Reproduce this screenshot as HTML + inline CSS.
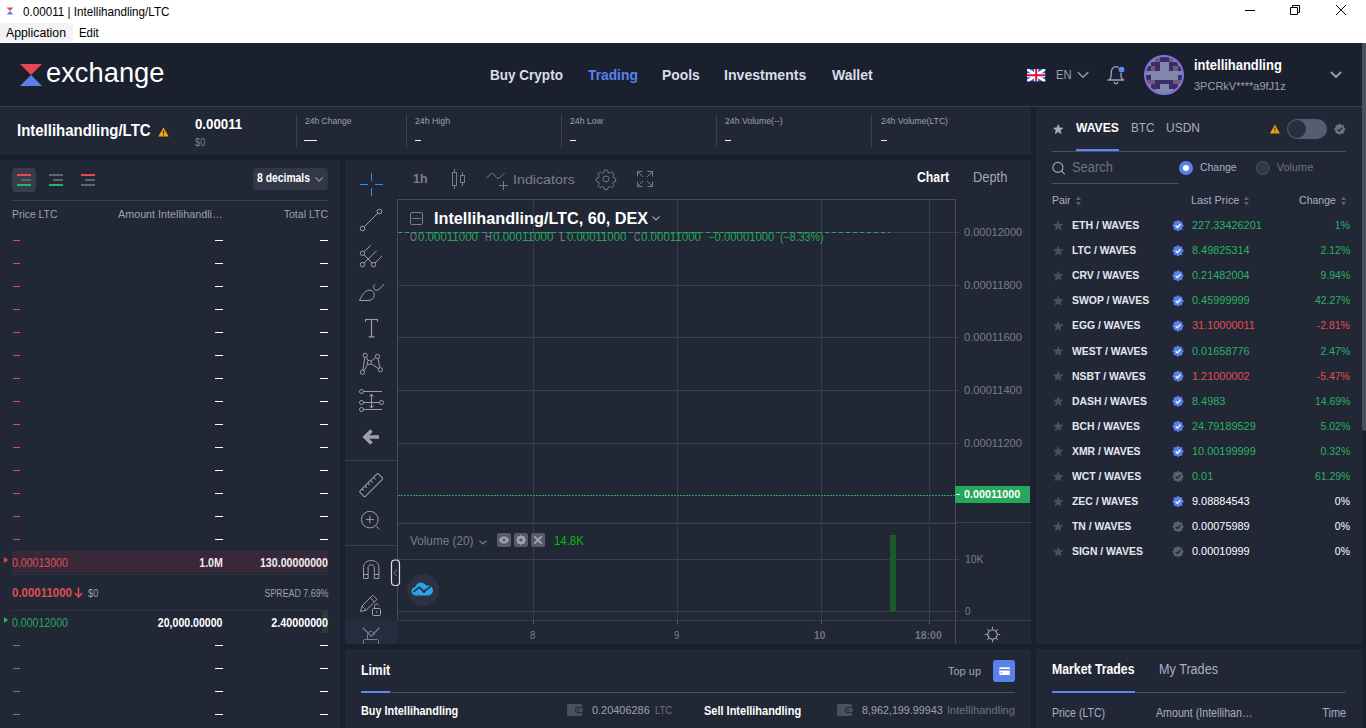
<!DOCTYPE html>
<html>
<head>
<meta charset="utf-8">
<title>0.00011 | Intellihandling/LTC</title>
<style>
*{box-sizing:border-box;margin:0;padding:0}
html,body{width:1366px;height:728px;overflow:hidden;background:#1a1f2d;font-family:"Liberation Sans",sans-serif;}
body{position:relative;color:#fff}
.a{position:absolute}
.t{position:absolute;white-space:nowrap;transform-origin:0 50%}
.r{position:absolute;white-space:nowrap;transform-origin:100% 50%}
.p{position:absolute;background:#222736}
.ln{position:absolute;background:#3a3f4e;height:1px}
.vl{position:absolute;background:#3a3f4e;width:1px}
.dw{position:absolute;background:#fff;height:1px;width:8px}
.dr{position:absolute;background:#e04d52;height:1px;width:7px;left:13px}
.dg{position:absolute;background:#28a85c;height:1px;width:7px;left:13px}
svg{position:absolute;overflow:visible}
</style>
</head>
<body>
<!-- TITLE BAR -->
<div class="a" style="left:0;top:0;width:1366px;height:43px;background:#fff"></div>
<svg style="left:6px;top:7px" width="8" height="8" viewBox="0 0 8 8"><path d="M0.6 0.4h6.8L4 3.9z" fill="#e5494d"/><path d="M0.6 7.6h6.8L4 4.1z" fill="#5a81ea"/></svg>
<div class="a" style="left:0;top:23px;width:73px;height:19px;background:#f3f3f3;border-radius:3px"></div>
<svg style="left:1240px;top:0" width="126" height="23" viewBox="0 0 126 23" fill="none" stroke="#000" stroke-width="1">
  <path d="M5 10.5h10"/>
  <path d="M50.5 7.5h7v7h-7z M52.5 7.5v-2h7v7h-2"/>
  <path d="M96 5l10 10M106 5l-10 10"/>
</svg>

<!-- HEADER -->
<div class="a" style="left:0;top:43px;width:1366px;height:63px;background:#1b202e"></div>
<div class="a" style="left:0;top:106px;width:1362px;height:1px;background:#3a3f50"></div>
<svg style="left:20px;top:64px" width="22" height="22" viewBox="0 0 22 22"><path d="M0 0h22L11 11z" fill="#e5494d"/><path d="M0 22h22L11 11z" fill="#5a81ea"/></svg>
<!-- flag -->
<svg style="left:1026.800px;top:68.700px" width="18.400" height="12.500" viewBox="0 0 60 40" preserveAspectRatio="none">
  <clipPath id="fc"><rect width="60" height="40"/></clipPath>
  <g clip-path="url(#fc)">
  <rect width="60" height="40" fill="#2a5af0"/>
  <path d="M0 0L60 40M60 0L0 40" stroke="#fff" stroke-width="9"/>
  <path d="M30 0v40M0 20h60" stroke="#fff" stroke-width="13.500"/>
  <path d="M30 0v40M0 20h60" stroke="#e0102a" stroke-width="6.500"/>
  </g>
</svg>
<svg style="left:1077px;top:71px" width="12" height="8" viewBox="0 0 12 8" fill="none" stroke="#8f95a8" stroke-width="1.600" stroke-linecap="round" stroke-linejoin="round"><path d="M1.200 1.500L6 6.300L10.800 1.500"/></svg>
<!-- bell -->
<svg style="left:1106px;top:65px" width="20" height="22" viewBox="0 0 20 22" fill="none" stroke="#9ba1b1" stroke-width="1.400" stroke-linecap="round" stroke-linejoin="round">
  <path d="M1.800 15h16M3.700 14.800c1.100-1.300 1.500-2.900 1.500-5.100V7.600c0-3.300 2.100-6 4.900-6s4.900 2.700 4.900 6v2.100c0 2.200.4 3.800 1.500 5.100"/>
  <path d="M8.300 17.500c.4.900 1 1.300 1.700 1.300s1.300-.4 1.700-1.300"/>
  <circle cx="15.500" cy="4.600" r="3.400" fill="#1b202e" stroke="none"/><circle cx="15.500" cy="4.600" r="2.900" fill="#5a8cf5" stroke="none"/>
</svg>
<!-- avatar -->
<svg style="left:1144px;top:55px" width="40" height="40" viewBox="0 0 40 40" shape-rendering="crispEdges">
  <clipPath id="av"><circle cx="20" cy="20" r="19"/></clipPath>
  <g clip-path="url(#av)">
    <rect width="40" height="40" fill="#8087aa"/>
    <g fill="#3a2d6e">
      <rect x="11" y="2" width="18" height="4.5"/>
      <rect x="6.5" y="6.5" width="9" height="9"/><rect x="24.5" y="6.5" width="9" height="9"/>
      <rect x="2" y="11" width="4.5" height="4.5"/><rect x="33.5" y="11" width="4.5" height="4.5"/>
      <rect x="0" y="20" width="6.5" height="4.5"/><rect x="33.5" y="20" width="6.5" height="4.5"/>
      <rect x="11" y="24.5" width="18" height="4.5"/>
      <rect x="6.5" y="29" width="9" height="4.5"/><rect x="24.5" y="29" width="9" height="4.5"/>
    </g>
    <g fill="#735a6e">
      <rect x="11" y="2" width="4.5" height="4.5"/><rect x="24.5" y="2" width="4.5" height="4.5"/>
      <rect x="6.5" y="11" width="4.5" height="4.5"/><rect x="29" y="11" width="4.5" height="4.5"/>
      <rect x="0" y="24.5" width="11" height="4.5"/><rect x="29" y="24.5" width="11" height="4.5"/>
      <rect x="6.5" y="33.5" width="4.5" height="4.5"/><rect x="29" y="33.5" width="4.5" height="4.5"/>
    </g>
  </g>
  <circle cx="20" cy="20" r="19" fill="none" stroke="#7d73d7" stroke-width="2" shape-rendering="auto"/>
</svg>
<svg style="left:1330px;top:71px" width="12" height="8" viewBox="0 0 12 8" fill="none" stroke="#9ba1b1" stroke-width="1.8" stroke-linecap="round" stroke-linejoin="round"><path d="M1.5 1.5L6 6L10.5 1.5"/></svg>

<!-- PANELS -->
<div class="p" style="left:0;top:107px;width:1031px;height:48px"></div>
<div class="p" style="left:0;top:160px;width:340px;height:568px"></div>
<div class="p" style="left:345px;top:160px;width:686px;height:484px"></div>
<div class="p" style="left:345px;top:649px;width:686px;height:79px"></div>
<div class="p" style="left:1036px;top:107px;width:326px;height:537px"></div>
<div class="p" style="left:1036px;top:649px;width:326px;height:79px"></div>
<div class="a" style="left:1362px;top:43px;width:4px;height:388px;background:#4b5061;border-radius:0 0 2px 2px"></div>

<!-- TICKER -->
<svg style="left:158px;top:127px" width="11" height="10" viewBox="0 0 11 10"><path d="M5.5 0.4L10.7 9.6H0.3z" fill="#f0a90f"/><path d="M5.5 3.4v3.2M5.5 7.6v1" stroke="#222736" stroke-width="1.2"/></svg>
<div class="vl" style="left:296px;top:114px;height:34px"></div>
<div class="vl" style="left:406px;top:114px;height:34px"></div>
<div class="vl" style="left:561px;top:114px;height:34px"></div>
<div class="vl" style="left:716px;top:114px;height:34px"></div>
<div class="vl" style="left:871px;top:114px;height:34px"></div>
<div class="a" style="left:304px;top:139.6px;width:13px;height:1.7px;background:#f4f5f8"></div>
<div class="a" style="left:414.5px;top:139.6px;width:6px;height:1.7px;background:#f4f5f8"></div>
<div class="a" style="left:569.5px;top:139.6px;width:6px;height:1.7px;background:#f4f5f8"></div>
<div class="a" style="left:725px;top:139.6px;width:6px;height:1.7px;background:#f4f5f8"></div>
<div class="a" style="left:880.5px;top:139.6px;width:6px;height:1.7px;background:#f4f5f8"></div>
<!-- ORDERBOOK -->
<div class="a" style="left:12px;top:168px;width:24px;height:24px;background:#373c4c;border-radius:4px"></div>
<div class="a" style="left:17px;top:174px;width:14px;height:2px;background:#e5494d"></div><div class="a" style="left:21px;top:179px;width:10px;height:2px;background:#5b6072"></div><div class="a" style="left:17px;top:184px;width:14px;height:2px;background:#28b463"></div>
<div class="a" style="left:49px;top:174px;width:14px;height:2px;background:#5b6072"></div><div class="a" style="left:53px;top:179px;width:10px;height:2px;background:#5b6072"></div><div class="a" style="left:49px;top:184px;width:14px;height:2px;background:#28b463"></div>
<div class="a" style="left:81px;top:174px;width:14px;height:2px;background:#e5494d"></div><div class="a" style="left:85px;top:179px;width:10px;height:2px;background:#5b6072"></div><div class="a" style="left:81px;top:184px;width:14px;height:2px;background:#5b6072"></div>
<div class="a" style="left:253px;top:168px;width:75px;height:22px;background:#333848;border-radius:4px"></div>
<svg style="left:315px;top:176.5px" width="8" height="5" viewBox="0 0 8 5" fill="none" stroke="#8a90a2" stroke-width="1.2"><path d="M0.4 0.5L4 4.2L7.6 0.5"/></svg>
<div class="ln" style="left:12px;top:200px;width:316px"></div>
<div class="dr" style="top:240px"></div><div class="dw" style="left:215px;top:240px"></div><div class="dw" style="left:320px;top:240px"></div>
<div class="dr" style="top:263px"></div><div class="dw" style="left:215px;top:263px"></div><div class="dw" style="left:320px;top:263px"></div>
<div class="dr" style="top:286px"></div><div class="dw" style="left:215px;top:286px"></div><div class="dw" style="left:320px;top:286px"></div>
<div class="dr" style="top:309px"></div><div class="dw" style="left:215px;top:309px"></div><div class="dw" style="left:320px;top:309px"></div>
<div class="dr" style="top:332px"></div><div class="dw" style="left:215px;top:332px"></div><div class="dw" style="left:320px;top:332px"></div>
<div class="dr" style="top:355px"></div><div class="dw" style="left:215px;top:355px"></div><div class="dw" style="left:320px;top:355px"></div>
<div class="dr" style="top:378px"></div><div class="dw" style="left:215px;top:378px"></div><div class="dw" style="left:320px;top:378px"></div>
<div class="dr" style="top:401px"></div><div class="dw" style="left:215px;top:401px"></div><div class="dw" style="left:320px;top:401px"></div>
<div class="dr" style="top:424px"></div><div class="dw" style="left:215px;top:424px"></div><div class="dw" style="left:320px;top:424px"></div>
<div class="dr" style="top:447px"></div><div class="dw" style="left:215px;top:447px"></div><div class="dw" style="left:320px;top:447px"></div>
<div class="dr" style="top:470px"></div><div class="dw" style="left:215px;top:470px"></div><div class="dw" style="left:320px;top:470px"></div>
<div class="dr" style="top:493px"></div><div class="dw" style="left:215px;top:493px"></div><div class="dw" style="left:320px;top:493px"></div>
<div class="dr" style="top:516px"></div><div class="dw" style="left:215px;top:516px"></div><div class="dw" style="left:320px;top:516px"></div>
<div class="dr" style="top:539px"></div><div class="dw" style="left:215px;top:539px"></div><div class="dw" style="left:320px;top:539px"></div>
<div class="dg" style="top:645px"></div><div class="dw" style="left:215px;top:645px"></div><div class="dw" style="left:320px;top:645px"></div>
<div class="dg" style="top:668px"></div><div class="dw" style="left:215px;top:668px"></div><div class="dw" style="left:320px;top:668px"></div>
<div class="dg" style="top:691px"></div><div class="dw" style="left:215px;top:691px"></div><div class="dw" style="left:320px;top:691px"></div>
<div class="dg" style="top:714px"></div><div class="dw" style="left:215px;top:714px"></div><div class="dw" style="left:320px;top:714px"></div>
<div class="a" style="left:12px;top:551px;width:316px;height:22px;background:#38293a"></div>
<div class="ln" style="left:12px;top:574px;width:316px;background:#2f3444"></div>
<div class="ln" style="left:12px;top:610px;width:316px;background:#2f3444"></div>
<div class="a" style="left:322px;top:611px;width:6px;height:22px;background:#243e3c"></div>
<svg style="left:4px;top:557px" width="4" height="6" viewBox="0 0 4 6"><path d="M0 0L4 3L0 6z" fill="#e5494d"/></svg>
<svg style="left:4px;top:617px" width="4" height="6" viewBox="0 0 4 6"><path d="M0 0L4 3L0 6z" fill="#28b463"/></svg>
<svg style="left:74px;top:587px" width="9" height="11" viewBox="0 0 9 11" fill="none" stroke="#e04d52" stroke-width="1.5"><path d="M4.5 0.5v9M0.8 6L4.5 9.8L8.2 6"/></svg>
<!-- CHART -->
<!-- pane borders & grid -->
<div class="a" style="left:397px;top:199px;width:559px;height:1px;background:#474b5a"></div>
<div class="a" style="left:397px;top:199px;width:1px;height:421px;background:#474b5a"></div>
<div class="a" style="left:955px;top:199px;width:1px;height:445px;background:#474b5a"></div>
<div class="a" style="left:398px;top:620px;width:633px;height:1px;background:#3a3f4e"></div>
<div class="a" style="left:398px;top:523px;width:557px;height:1px;background:#3d4251"></div><div class="a" style="left:398px;top:522px;width:557px;height:1px;background:#282d3c"></div><div class="a" style="left:956px;top:522px;width:75px;height:1px;background:#3d4251"></div>
<!-- vertical grid -->
<div class="a" style="left:533px;top:200px;width:1px;height:322px;background:#393e4d"></div><div class="a" style="left:533px;top:525px;width:1px;height:95px;background:#393e4d"></div>
<div class="a" style="left:677px;top:200px;width:1px;height:322px;background:#393e4d"></div><div class="a" style="left:677px;top:525px;width:1px;height:95px;background:#393e4d"></div>
<div class="a" style="left:821px;top:200px;width:1px;height:322px;background:#393e4d"></div><div class="a" style="left:821px;top:525px;width:1px;height:95px;background:#393e4d"></div>
<div class="a" style="left:929px;top:200px;width:1px;height:322px;background:#393e4d"></div><div class="a" style="left:929px;top:525px;width:1px;height:95px;background:#393e4d"></div>
<!-- horizontal grid -->
<div class="a" style="left:398px;top:232px;width:562px;height:1px;background:#393e4d"></div>
<div class="a" style="left:398px;top:285px;width:562px;height:1px;background:#393e4d"></div>
<div class="a" style="left:398px;top:337px;width:562px;height:1px;background:#393e4d"></div>
<div class="a" style="left:398px;top:390px;width:562px;height:1px;background:#393e4d"></div>
<div class="a" style="left:398px;top:443px;width:562px;height:1px;background:#393e4d"></div>
<div class="a" style="left:398px;top:559px;width:562px;height:1px;background:#393e4d"></div>
<div class="a" style="left:398px;top:611px;width:562px;height:1px;background:#393e4d"></div>
<!-- time ticks -->
<div class="a" style="left:533px;top:621px;width:1px;height:3px;background:#5b6072"></div>
<div class="a" style="left:677px;top:621px;width:1px;height:3px;background:#5b6072"></div>
<div class="a" style="left:821px;top:621px;width:1px;height:3px;background:#5b6072"></div>
<div class="a" style="left:929px;top:621px;width:1px;height:3px;background:#5b6072"></div>
<!-- green dashed line (top) and dotted price line -->
<svg style="left:398px;top:232px" width="492" height="1" viewBox="0 0 492 1"><path d="M0 0.5H492" stroke="#26a65b" stroke-width="1" stroke-dasharray="4 3"/></svg>
<svg style="left:398px;top:495px" width="557" height="1" viewBox="0 0 557 1"><path d="M0 0.5H557" stroke="#26a65b" stroke-width="1" stroke-dasharray="2 1"/></svg>
<!-- volume bar -->
<div class="a" style="left:890px;top:535px;width:6px;height:76px;background:#1c5a2c"></div>
<!-- price label -->
<div class="a" style="left:955px;top:486px;width:75px;height:17px;background:#26a85c"></div>
<div class="a" style="left:956px;top:494px;width:4px;height:1px;background:#fff"></div>
<!-- volume legend buttons -->
<div class="a" style="left:497px;top:533px;width:14px;height:14px;background:#575b68;border-radius:2px"></div>
<div class="a" style="left:514px;top:533px;width:14px;height:14px;background:#575b68;border-radius:2px"></div>
<div class="a" style="left:531px;top:533px;width:14px;height:14px;background:#575b68;border-radius:2px"></div>
<svg style="left:497px;top:533px" width="48" height="14" viewBox="0 0 48 14" fill="none" stroke="#a4a8b4">
  <path d="M2 7c1.5-2.6 3.2-3.6 5-3.6s3.500 1 5 3.600c-1.500 2.600-3.200 3.600-5 3.600s-3.500-1-5-3.600z" fill="#a4a8b4" stroke="none"/><circle cx="7" cy="7" r="1.700" fill="#575b68" stroke="none"/>
  <circle cx="24" cy="7" r="2.900" stroke-width="2.200"/><path d="M24 2.200v1.500M24 10.300v1.500M19.200 7h1.500M27.300 7h1.500M20.600 3.600l1.100 1.100M26.300 9.300l1.100 1.100M20.600 10.400l1.100-1.100M26.300 4.700l1.100-1.100" stroke-width="1.700"/>
  <path d="M37.300 3.300l7.400 7.400M44.700 3.300l-7.400 7.400" stroke-width="1.800"/>
</svg>
<svg style="left:479px;top:540px" width="8" height="5" viewBox="0 0 8 5" fill="none" stroke="#787d8f" stroke-width="1.200"><path d="M0.500 0.700L4 4L7.500 0.700"/></svg>
<!-- title collapse box + chevron -->
<svg style="left:410px;top:212px" width="13" height="13" viewBox="0 0 13 13" fill="none" stroke="#787d8f" stroke-width="1"><rect x="0.500" y="0.500" width="12" height="12" rx="1.500"/><path d="M2.200 6.500h8.600"/></svg>
<svg style="left:652px;top:216px" width="8" height="5" viewBox="0 0 8 5" fill="none" stroke="#9b9fae" stroke-width="1.200"><path d="M0.500 0.500L4 4L7.500 0.500"/></svg>
<!-- TV logo -->
<div class="a" style="left:406.500px;top:574px;width:32px;height:32px;border-radius:16px;background:#2c3143"></div>
<svg style="left:411px;top:582px" width="23" height="14" viewBox="0 0 23 14"><path d="M5.200 13.500c-2.700 0-4.700-1.800-4.700-4.200 0-2.200 1.600-3.900 3.700-4.200C4.900 2.300 7.200 0.500 9.900 0.500c2.400 0 4.400 1.300 5.300 3.300 0.500-0.200 1-0.300 1.600-0.300 2.900 0 5.200 2.200 5.200 5s-2.300 5-5.200 5z" fill="#2aa4e8"/><path d="M2.500 9.800L8.200 5.300L13 9.500L19.500 4.500" fill="none" stroke="#2c3143" stroke-width="1.700"/><circle cx="13" cy="9.500" r="1.500" fill="#2c3143"/></svg>
<!-- axis settings icon -->
<svg style="left:984px;top:626px" width="17" height="17" viewBox="0 0 17 17" fill="none" stroke="#9b9fae" stroke-width="1.200"><circle cx="8.500" cy="8.500" r="4.700"/><path d="M8.500 0.800v2.600M8.500 13.600v2.600M0.800 8.500h2.600M13.600 8.500h2.600M3 3l1.900 1.900M12.100 12.100l1.900 1.900M3 14l1.900-1.900M12.100 4.900l1.900-1.900" stroke-width="1"/></svg>
<!-- CHART TOOLBARS -->
<div class="a" style="left:345px;top:620px;width:52px;height:24px;background:#272b3f"></div>
<div class="ln" style="left:345px;top:460px;width:52px"></div>
<div class="ln" style="left:345px;top:545px;width:52px"></div>
<svg style="left:0;top:0" width="1366" height="728" viewBox="0 0 1366 728" fill="none" stroke="#9b9fae" stroke-width="1" stroke-linecap="butt">
  <!-- crosshair -->
  <path d="M360 184.500h8M375 184.500h8M371.500 173v8M371.500 188v8" stroke="#2196f3"/>
  <!-- trend line -->
  <circle cx="379.500" cy="211.500" r="2.300"/><circle cx="362.500" cy="228.500" r="2.300"/><path d="M364.200 226.800L377.800 213.200"/>
  <!-- pitchfork -->
  <circle cx="362.500" cy="253.300" r="2.200"/><circle cx="362.500" cy="264.600" r="2.200"/><circle cx="373.500" cy="264.600" r="2.200"/>
  <path d="M364.100 263L376.600 250.800M364.100 251.700L370.900 245.300M375.100 263L382 256M364.100 254.900L371.900 263"/>
  <!-- brush -->
  <path d="M359.500 300.500C361.500 296 364.300 290.800 368.800 290.200C372.300 289.800 374.500 292.400 374.300 295.300C374 298.600 371.300 300.300 368 300.500Z"/>
  <path d="M375.400 284.200C373.200 285.800 372.900 288.400 374.900 289.700C376.400 290.600 378 290.300 379 289.300L384.200 284.200"/>
  <!-- text -->
  <path d="M365 319.500h13M371.500 319.500v17.300M368.700 336.800h5.800M365.500 319.500v2.200M377.500 319.500v2.200" stroke-width="1.150"/>
  <!-- pattern -->
  <circle cx="365.200" cy="355.300" r="2.100"/><circle cx="377.400" cy="356.400" r="2.100"/><circle cx="369.300" cy="362.500" r="2.100"/><circle cx="380.400" cy="369.800" r="2.100"/><circle cx="362.500" cy="372.200" r="2.100"/>
  <path d="M366.200 357.200L368.300 360.600M364.800 357.400L362.900 370.100M364 370.700L367.800 364M371 361.200L375.700 357.700M371.100 363.700L378.600 368.600M378 358.400L379.800 367.800"/>
  <!-- forecast -->
  <circle cx="361.500" cy="391.500" r="2"/><circle cx="361.500" cy="402.500" r="2"/><circle cx="381.500" cy="402.500" r="2"/><circle cx="361.500" cy="409.500" r="2"/>
  <path d="M363.500 391.500H382M363.500 402.500H379.500M363.500 409.500H382M371.500 394.500V407.500"/>
  <path d="M369.500 396.500L371.500 394L373.500 396.500M369.500 405.500L371.500 408L373.500 405.500" />
  <!-- back arrow -->
  <path d="M379 437H366M371.500 430.500L365 437L371.500 443.500" stroke-width="3.600" stroke-linejoin="miter"/>
  <!-- ruler -->
  <g transform="translate(371.200 485.100) rotate(-45)"><rect x="-13" y="-3.800" width="26" height="7.600" rx="1"/><path d="M-9 -3.800v2.800M-5 -3.800v2.800M-1 -3.800v2.800M3 -3.800v2.800M7 -3.800v2.800"/></g>
  <!-- zoom -->
  <circle cx="369.800" cy="519.600" r="8.300"/><path d="M376 525.800L379.600 529.400M365.800 519.600h8M369.800 515.600v8"/>
  <!-- magnet -->
  <path d="M363.500 578.500V567.500C363.500 563.200 366.800 560.500 371.200 560.500C375.600 560.500 378.900 563.200 378.900 567.500V578.500H374.300V567.700C374.300 565.800 373 564.800 371.200 564.800C369.400 564.800 368.100 565.800 368.100 567.700V578.500ZM363.500 574.500H368.100M374.300 574.500H378.900"/>
  <!-- pencil lock -->
  <path d="M360.500 611.500L362 606L372.800 595.200L377 599.400L366.200 610.200ZM370.300 597.700L374.500 601.900M362 606L366.200 610.200"/>
  <rect x="372.500" y="608.500" width="8" height="7" rx="1"/><path d="M374.500 608.500V606.300C374.500 604.800 375.500 604 376.700 604C377.800 604 378.600 604.600 378.800 605.500M376.500 611.500v1.500"/>
  <!-- bottom V + lock -->
  <g stroke="#787d8f"><path d="M362.800 627.800L371.200 636.200L379.400 627.800" stroke-width="1.300"/><path d="M367.500 639V634.800C367.500 632.800 369 631.500 371 631.500C373 631.500 374.500 632.800 374.500 634.800"/><path d="M363.500 644V641C363.500 640 364.300 639.500 365 639.500H377C377.800 639.500 378.500 640 378.500 641V644"/></g>
  <!-- collapse handle -->
  <rect x="391.500" y="560" width="8" height="25.500" rx="3.500" stroke="#dfe1e8" stroke-width="1.200" fill="#222736"/><path d="M396.500 569.500L394.200 572.700L396.500 576" stroke="#787d8f"/>
  <!-- TOP TOOLBAR -->
  <g stroke="#787d8f">
    <rect x="452.500" y="172.500" width="4" height="13"/><path d="M454.500 169v3.500M454.500 185.500V189"/>
    <rect x="460.500" y="175.500" width="4" height="7"/><path d="M462.500 172v3.500M462.500 182.500V186"/>
    <path d="M486.300 178.400L490.300 174.300C491.300 173.300 492.600 173.300 493.600 174.300L496.500 177.500C497.500 178.600 498.800 178.600 499.800 177.600L504.700 173"/>
    <path d="M499 185.500h9M503.500 181v9"/>
    <!-- gear -->
    <g transform="translate(606 179) scale(0.930) translate(-606 -179)"><circle cx="606" cy="179" r="3.200"/>
    <path d="M604.300 169.500h3.400l.6 2.500 1.700.7 2.200-1.400 2.400 2.400-1.400 2.200.7 1.700 2.500.6v3.400l-2.500.6-.7 1.700 1.400 2.200-2.400 2.400-2.200-1.400-1.700.7-.6 2.500h-3.400l-.6-2.500-1.700-.7-2.200 1.400-2.400-2.400 1.400-2.200-.7-1.700-2.500-.6v-3.400l2.500-.6.7-1.700-1.400-2.200 2.400-2.400 2.200 1.400 1.700-.7z" stroke-linejoin="round"/></g>
    <!-- fullscreen -->
    <path d="M637.500 176.500V171.500H642.500M637.500 171.500L643 177M652.500 176.500V171.500H647.500M652.500 171.500L647 177M637.500 181.500V186.500H642.500M637.500 186.500L643 181M652.500 181.500V186.500H647.500M652.500 186.500L647 181"/>
  </g>
</svg>
<!-- MARKETS -->
<div class="ln" style="left:1052px;top:151px;width:294px;background:#4b5061"></div>
<div class="a" style="left:1076px;top:149px;width:43px;height:2px;background:#5c86f7"></div>
<div class="ln" style="left:1052px;top:183px;width:127px;background:#4b5061"></div>
<div class="a" style="left:1287px;top:119px;width:40px;height:20px;border-radius:10px;background:#575d70"></div>
<div class="a" style="left:1288px;top:120px;width:18px;height:18px;border-radius:9px;background:#2a2f3f"></div>
<svg style="left:0;top:0" width="1366" height="728" viewBox="0 0 1366 728">
<polygon points="1058.20,124.80 1059.38,127.97 1062.77,128.12 1060.12,130.22 1061.02,133.48 1058.20,131.62 1055.38,133.48 1056.28,130.22 1053.63,128.12 1057.02,127.97" fill="#a9aec4" stroke="#a9aec4" stroke-width="0.8" stroke-linejoin="round"/>
<path d="M1274.900 124.900L1279.500 133.300H1270.300z" fill="#f0a90f" stroke="#f0a90f" stroke-width="0.400" stroke-linejoin="round"/><path d="M1274.900 127.600v3M1274.900 131.500v1" stroke="#222736" stroke-width="1.100"/>
<polygon points="1339.80,123.80 1341.45,125.23 1343.62,125.38 1343.77,127.55 1345.20,129.20 1343.77,130.85 1343.62,133.02 1341.45,133.17 1339.80,134.60 1338.15,133.17 1335.98,133.02 1335.83,130.85 1334.40,129.20 1335.83,127.55 1335.98,125.38 1338.15,125.23" fill="#6c7285" stroke="#6c7285" stroke-width="0.8" stroke-linejoin="round"/><path d="M1337.50 129.30L1339.20 131.00L1342.30 127.50" fill="none" stroke="#222736" stroke-width="1.3"/>
<circle cx="1057.9" cy="167.400" r="5" fill="none" stroke="#9ba1b1" stroke-width="1.200"/><path d="M1061.500 171L1064.800 174.300" stroke="#9ba1b1" stroke-width="1.200"/>
<circle cx="1186" cy="168" r="7" fill="#5a81ea"/><circle cx="1186" cy="168" r="3" fill="#fff"/>
<circle cx="1263" cy="168" r="6.500" fill="#333848" stroke="#4b5061" stroke-width="1"/>
<path d="M1076 200.0L1078.5 196.5L1081 200.0z M1076 202.0L1078.5 205.5L1081 202.0z" fill="#5b6072"/>
<path d="M1244 200.0L1246.5 196.5L1249 200.0z M1244 202.0L1246.5 205.5L1249 202.0z" fill="#5b6072"/>
<path d="M1341 200.0L1343.5 196.5L1346 200.0z M1341 202.0L1343.5 205.5L1346 202.0z" fill="#5b6072"/>
<polygon points="1058.20,221.20 1059.38,224.37 1062.77,224.52 1060.12,226.62 1061.02,229.88 1058.20,228.02 1055.38,229.88 1056.28,226.62 1053.63,224.52 1057.02,224.37" fill="#4b5061" stroke="#4b5061" stroke-width="0.8" stroke-linejoin="round"/>
<polygon points="1178.00,220.30 1179.65,221.73 1181.82,221.88 1181.97,224.05 1183.40,225.70 1181.97,227.35 1181.82,229.52 1179.65,229.67 1178.00,231.10 1176.35,229.67 1174.18,229.52 1174.03,227.35 1172.60,225.70 1174.03,224.05 1174.18,221.88 1176.35,221.73" fill="#5a81ea" stroke="#5a81ea" stroke-width="0.8" stroke-linejoin="round"/><path d="M1175.70 225.80L1177.40 227.50L1180.50 224.00" fill="none" stroke="#fff" stroke-width="1.3"/>
<polygon points="1058.20,246.28 1059.38,249.45 1062.77,249.60 1060.12,251.70 1061.02,254.96 1058.20,253.10 1055.38,254.96 1056.28,251.70 1053.63,249.60 1057.02,249.45" fill="#4b5061" stroke="#4b5061" stroke-width="0.8" stroke-linejoin="round"/>
<polygon points="1178.00,245.38 1179.65,246.81 1181.82,246.96 1181.97,249.13 1183.40,250.78 1181.97,252.43 1181.82,254.60 1179.65,254.75 1178.00,256.18 1176.35,254.75 1174.18,254.60 1174.03,252.43 1172.60,250.78 1174.03,249.13 1174.18,246.96 1176.35,246.81" fill="#5a81ea" stroke="#5a81ea" stroke-width="0.8" stroke-linejoin="round"/><path d="M1175.70 250.88L1177.40 252.58L1180.50 249.08" fill="none" stroke="#fff" stroke-width="1.3"/>
<polygon points="1058.20,271.36 1059.38,274.53 1062.77,274.68 1060.12,276.78 1061.02,280.04 1058.20,278.18 1055.38,280.04 1056.28,276.78 1053.63,274.68 1057.02,274.53" fill="#4b5061" stroke="#4b5061" stroke-width="0.8" stroke-linejoin="round"/>
<polygon points="1178.00,270.46 1179.65,271.89 1181.82,272.04 1181.97,274.21 1183.40,275.86 1181.97,277.51 1181.82,279.68 1179.65,279.83 1178.00,281.26 1176.35,279.83 1174.18,279.68 1174.03,277.51 1172.60,275.86 1174.03,274.21 1174.18,272.04 1176.35,271.89" fill="#5a81ea" stroke="#5a81ea" stroke-width="0.8" stroke-linejoin="round"/><path d="M1175.70 275.96L1177.40 277.66L1180.50 274.16" fill="none" stroke="#fff" stroke-width="1.3"/>
<polygon points="1058.20,296.44 1059.38,299.61 1062.77,299.76 1060.12,301.86 1061.02,305.12 1058.20,303.26 1055.38,305.12 1056.28,301.86 1053.63,299.76 1057.02,299.61" fill="#4b5061" stroke="#4b5061" stroke-width="0.8" stroke-linejoin="round"/>
<polygon points="1178.00,295.54 1179.65,296.97 1181.82,297.12 1181.97,299.29 1183.40,300.94 1181.97,302.59 1181.82,304.76 1179.65,304.91 1178.00,306.34 1176.35,304.91 1174.18,304.76 1174.03,302.59 1172.60,300.94 1174.03,299.29 1174.18,297.12 1176.35,296.97" fill="#5a81ea" stroke="#5a81ea" stroke-width="0.8" stroke-linejoin="round"/><path d="M1175.70 301.04L1177.40 302.74L1180.50 299.24" fill="none" stroke="#fff" stroke-width="1.3"/>
<polygon points="1058.20,321.52 1059.38,324.69 1062.77,324.84 1060.12,326.94 1061.02,330.20 1058.20,328.34 1055.38,330.20 1056.28,326.94 1053.63,324.84 1057.02,324.69" fill="#4b5061" stroke="#4b5061" stroke-width="0.8" stroke-linejoin="round"/>
<polygon points="1178.00,320.62 1179.65,322.05 1181.82,322.20 1181.97,324.37 1183.40,326.02 1181.97,327.67 1181.82,329.84 1179.65,329.99 1178.00,331.42 1176.35,329.99 1174.18,329.84 1174.03,327.67 1172.60,326.02 1174.03,324.37 1174.18,322.20 1176.35,322.05" fill="#5a81ea" stroke="#5a81ea" stroke-width="0.8" stroke-linejoin="round"/><path d="M1175.70 326.12L1177.40 327.82L1180.50 324.32" fill="none" stroke="#fff" stroke-width="1.3"/>
<polygon points="1058.20,346.60 1059.38,349.77 1062.77,349.92 1060.12,352.02 1061.02,355.28 1058.20,353.42 1055.38,355.28 1056.28,352.02 1053.63,349.92 1057.02,349.77" fill="#4b5061" stroke="#4b5061" stroke-width="0.8" stroke-linejoin="round"/>
<polygon points="1178.00,345.70 1179.65,347.13 1181.82,347.28 1181.97,349.45 1183.40,351.10 1181.97,352.75 1181.82,354.92 1179.65,355.07 1178.00,356.50 1176.35,355.07 1174.18,354.92 1174.03,352.75 1172.60,351.10 1174.03,349.45 1174.18,347.28 1176.35,347.13" fill="#5a81ea" stroke="#5a81ea" stroke-width="0.8" stroke-linejoin="round"/><path d="M1175.70 351.20L1177.40 352.90L1180.50 349.40" fill="none" stroke="#fff" stroke-width="1.3"/>
<polygon points="1058.20,371.68 1059.38,374.85 1062.77,375.00 1060.12,377.10 1061.02,380.36 1058.20,378.50 1055.38,380.36 1056.28,377.10 1053.63,375.00 1057.02,374.85" fill="#4b5061" stroke="#4b5061" stroke-width="0.8" stroke-linejoin="round"/>
<polygon points="1178.00,370.78 1179.65,372.21 1181.82,372.36 1181.97,374.53 1183.40,376.18 1181.97,377.83 1181.82,380.00 1179.65,380.15 1178.00,381.58 1176.35,380.15 1174.18,380.00 1174.03,377.83 1172.60,376.18 1174.03,374.53 1174.18,372.36 1176.35,372.21" fill="#5a81ea" stroke="#5a81ea" stroke-width="0.8" stroke-linejoin="round"/><path d="M1175.70 376.28L1177.40 377.98L1180.50 374.48" fill="none" stroke="#fff" stroke-width="1.3"/>
<polygon points="1058.20,396.76 1059.38,399.93 1062.77,400.08 1060.12,402.18 1061.02,405.44 1058.20,403.58 1055.38,405.44 1056.28,402.18 1053.63,400.08 1057.02,399.93" fill="#4b5061" stroke="#4b5061" stroke-width="0.8" stroke-linejoin="round"/>
<polygon points="1178.00,395.86 1179.65,397.29 1181.82,397.44 1181.97,399.61 1183.40,401.26 1181.97,402.91 1181.82,405.08 1179.65,405.23 1178.00,406.66 1176.35,405.23 1174.18,405.08 1174.03,402.91 1172.60,401.26 1174.03,399.61 1174.18,397.44 1176.35,397.29" fill="#5a81ea" stroke="#5a81ea" stroke-width="0.8" stroke-linejoin="round"/><path d="M1175.70 401.36L1177.40 403.06L1180.50 399.56" fill="none" stroke="#fff" stroke-width="1.3"/>
<polygon points="1058.20,421.84 1059.38,425.01 1062.77,425.16 1060.12,427.26 1061.02,430.52 1058.20,428.66 1055.38,430.52 1056.28,427.26 1053.63,425.16 1057.02,425.01" fill="#4b5061" stroke="#4b5061" stroke-width="0.8" stroke-linejoin="round"/>
<polygon points="1178.00,420.94 1179.65,422.37 1181.82,422.52 1181.97,424.69 1183.40,426.34 1181.97,427.99 1181.82,430.16 1179.65,430.31 1178.00,431.74 1176.35,430.31 1174.18,430.16 1174.03,427.99 1172.60,426.34 1174.03,424.69 1174.18,422.52 1176.35,422.37" fill="#5a81ea" stroke="#5a81ea" stroke-width="0.8" stroke-linejoin="round"/><path d="M1175.70 426.44L1177.40 428.14L1180.50 424.64" fill="none" stroke="#fff" stroke-width="1.3"/>
<polygon points="1058.20,446.92 1059.38,450.09 1062.77,450.24 1060.12,452.34 1061.02,455.60 1058.20,453.74 1055.38,455.60 1056.28,452.34 1053.63,450.24 1057.02,450.09" fill="#4b5061" stroke="#4b5061" stroke-width="0.8" stroke-linejoin="round"/>
<polygon points="1178.00,446.02 1179.65,447.45 1181.82,447.60 1181.97,449.77 1183.40,451.42 1181.97,453.07 1181.82,455.24 1179.65,455.39 1178.00,456.82 1176.35,455.39 1174.18,455.24 1174.03,453.07 1172.60,451.42 1174.03,449.77 1174.18,447.60 1176.35,447.45" fill="#5a81ea" stroke="#5a81ea" stroke-width="0.8" stroke-linejoin="round"/><path d="M1175.70 451.52L1177.40 453.22L1180.50 449.72" fill="none" stroke="#fff" stroke-width="1.3"/>
<polygon points="1058.20,472.00 1059.38,475.17 1062.77,475.32 1060.12,477.42 1061.02,480.68 1058.20,478.82 1055.38,480.68 1056.28,477.42 1053.63,475.32 1057.02,475.17" fill="#4b5061" stroke="#4b5061" stroke-width="0.8" stroke-linejoin="round"/>
<polygon points="1178.00,471.10 1179.65,472.53 1181.82,472.68 1181.97,474.85 1183.40,476.50 1181.97,478.15 1181.82,480.32 1179.65,480.47 1178.00,481.90 1176.35,480.47 1174.18,480.32 1174.03,478.15 1172.60,476.50 1174.03,474.85 1174.18,472.68 1176.35,472.53" fill="#5b6072" stroke="#5b6072" stroke-width="0.8" stroke-linejoin="round"/><path d="M1175.70 476.60L1177.40 478.30L1180.50 474.80" fill="none" stroke="#222736" stroke-width="1.3"/>
<polygon points="1058.20,497.08 1059.38,500.25 1062.77,500.40 1060.12,502.50 1061.02,505.76 1058.20,503.90 1055.38,505.76 1056.28,502.50 1053.63,500.40 1057.02,500.25" fill="#4b5061" stroke="#4b5061" stroke-width="0.8" stroke-linejoin="round"/>
<polygon points="1178.00,496.18 1179.65,497.61 1181.82,497.76 1181.97,499.93 1183.40,501.58 1181.97,503.23 1181.82,505.40 1179.65,505.55 1178.00,506.98 1176.35,505.55 1174.18,505.40 1174.03,503.23 1172.60,501.58 1174.03,499.93 1174.18,497.76 1176.35,497.61" fill="#5a81ea" stroke="#5a81ea" stroke-width="0.8" stroke-linejoin="round"/><path d="M1175.70 501.68L1177.40 503.38L1180.50 499.88" fill="none" stroke="#fff" stroke-width="1.3"/>
<polygon points="1058.20,522.16 1059.38,525.33 1062.77,525.48 1060.12,527.58 1061.02,530.84 1058.20,528.98 1055.38,530.84 1056.28,527.58 1053.63,525.48 1057.02,525.33" fill="#4b5061" stroke="#4b5061" stroke-width="0.8" stroke-linejoin="round"/>
<polygon points="1178.00,521.26 1179.65,522.69 1181.82,522.84 1181.97,525.01 1183.40,526.66 1181.97,528.31 1181.82,530.48 1179.65,530.63 1178.00,532.06 1176.35,530.63 1174.18,530.48 1174.03,528.31 1172.60,526.66 1174.03,525.01 1174.18,522.84 1176.35,522.69" fill="#5b6072" stroke="#5b6072" stroke-width="0.8" stroke-linejoin="round"/><path d="M1175.70 526.76L1177.40 528.46L1180.50 524.96" fill="none" stroke="#222736" stroke-width="1.3"/>
<polygon points="1058.20,547.24 1059.38,550.41 1062.77,550.56 1060.12,552.66 1061.02,555.92 1058.20,554.06 1055.38,555.92 1056.28,552.66 1053.63,550.56 1057.02,550.41" fill="#4b5061" stroke="#4b5061" stroke-width="0.8" stroke-linejoin="round"/>
<polygon points="1178.00,546.34 1179.65,547.77 1181.82,547.92 1181.97,550.09 1183.40,551.74 1181.97,553.39 1181.82,555.56 1179.65,555.71 1178.00,557.14 1176.35,555.71 1174.18,555.56 1174.03,553.39 1172.60,551.74 1174.03,550.09 1174.18,547.92 1176.35,547.77" fill="#5b6072" stroke="#5b6072" stroke-width="0.8" stroke-linejoin="round"/><path d="M1175.70 551.84L1177.40 553.54L1180.50 550.04" fill="none" stroke="#222736" stroke-width="1.3"/>
</svg>
<!-- FORM -->
<div class="ln" style="left:361px;top:692px;width:654px;background:#4b5061"></div>
<div class="a" style="left:361px;top:691px;width:29px;height:2px;background:#5c86f7"></div>
<div class="a" style="left:993px;top:660px;width:22px;height:22px;border-radius:3px;background:#5a81ea"></div>
<svg style="left:998.700px;top:667.200px" width="11.200" height="8.300" viewBox="0 0 12 9"><rect x="0.300" y="0.300" width="11.400" height="8.400" rx="1" fill="#fff"/><rect x="0.300" y="2.200" width="11.400" height="1.600" fill="#5a81ea"/><rect x="1.800" y="5.600" width="1.600" height="1.300" fill="#5a81ea"/></svg>
<svg style="left:567px;top:704px" width="16" height="12" viewBox="0 0 16 12"><path d="M1.500 0H13.500C14.400 0 15 0.600 15 1.500V3H10.500C9 3 8 4.300 8 6C8 7.700 9 9 10.500 9H15V10.500C15 11.400 14.400 12 13.500 12H1.500C0.600 12 0 11.400 0 10.500V1.500C0 0.600 0.600 0 1.500 0Z" fill="#4b5061"/><rect x="9" y="4" width="7" height="4" rx="1.600" fill="#4b5061"/><circle cx="11" cy="6" r="0.900" fill="#222736"/></svg>
<svg style="left:837px;top:704px" width="16" height="12" viewBox="0 0 16 12"><path d="M1.500 0H13.500C14.400 0 15 0.600 15 1.500V3H10.500C9 3 8 4.300 8 6C8 7.700 9 9 10.500 9H15V10.500C15 11.400 14.400 12 13.500 12H1.500C0.600 12 0 11.400 0 10.500V1.500C0 0.600 0.600 0 1.500 0Z" fill="#4b5061"/><rect x="9" y="4" width="7" height="4" rx="1.600" fill="#4b5061"/><circle cx="11" cy="6" r="0.900" fill="#222736"/></svg>
<!-- TRADES -->
<div class="ln" style="left:1052px;top:692px;width:294px;background:#4b5061"></div>
<div class="a" style="left:1052px;top:691px;width:83px;height:2px;background:#5c86f7"></div>
<!-- TEXT -->
<span class="t" style="top:5px;font-size:12px;line-height:14px;color:#000;left:23.4px;transform:scaleX(0.9716);">0.00011 | Intellihandling/LTC</span>
<span class="t" style="top:26px;font-size:12px;line-height:14px;color:#000;left:6px;transform:scaleX(1.0218);">Application</span>
<span class="t" style="top:26px;font-size:12px;line-height:14px;color:#000;left:79.3px;transform:scaleX(0.9523);">Edit</span>
<span class="t" style="top:58px;font-size:27px;line-height:30px;color:#fff;left:46.2px;transform:scaleX(1.0119);">exchange</span>
<span class="t" style="top:66px;font-size:15px;line-height:17px;color:#d9dde9;font-weight:bold;left:489.7px;transform:scaleX(0.9017);">Buy Crypto</span>
<span class="t" style="top:66px;font-size:15px;line-height:17px;color:#5a81ea;font-weight:bold;left:587.5px;transform:scaleX(0.9193);">Trading</span>
<span class="t" style="top:66px;font-size:15px;line-height:17px;color:#d9dde9;font-weight:bold;left:662px;transform:scaleX(0.9230);">Pools</span>
<span class="t" style="top:66px;font-size:15px;line-height:17px;color:#d9dde9;font-weight:bold;left:724.1px;transform:scaleX(0.9412);">Investments</span>
<span class="t" style="top:66px;font-size:15px;line-height:17px;color:#d9dde9;font-weight:bold;left:831.5px;transform:scaleX(0.9330);">Wallet</span>
<span class="t" style="top:68px;font-size:12.5px;line-height:14px;color:#9ba1b1;left:1055.8px;transform:scaleX(0.8978);">EN</span>
<span class="t" style="top:57px;font-size:14px;line-height:16px;color:#fff;font-weight:bold;left:1194.1px;transform:scaleX(0.9253);">intellihandling</span>
<span class="t" style="top:80px;font-size:11px;line-height:12px;color:#9ba1b1;left:1194px;">3PCRkV****a9fJ1z</span>
<span class="t" style="top:122px;font-size:16px;line-height:17px;color:#fff;font-weight:bold;left:16.7px;transform:scaleX(0.9356);">Intellihandling/LTC</span>
<span class="t" style="top:115.3px;font-size:15px;line-height:17px;color:#fff;font-weight:bold;left:194.5px;transform:scaleX(0.8838);">0.00011</span>
<span class="t" style="top:136px;font-size:10.5px;line-height:12px;color:#7d8397;left:194.9px;transform:scaleX(0.8813);">$0</span>
<span class="t" style="top:115px;font-size:9.5px;line-height:11px;color:#9ba1b1;left:304.6px;transform:scaleX(0.8961);">24h Change</span>
<span class="t" style="top:115px;font-size:9.5px;line-height:11px;color:#9ba1b1;left:414.5px;transform:scaleX(0.9203);">24h High</span>
<span class="t" style="top:115px;font-size:9.5px;line-height:11px;color:#9ba1b1;left:569.9px;transform:scaleX(0.9187);">24h Low</span>
<span class="t" style="top:115px;font-size:9.5px;line-height:11px;color:#9ba1b1;left:725px;transform:scaleX(0.9182);">24h Volume(--)</span>
<span class="t" style="top:115px;font-size:9.5px;line-height:11px;color:#9ba1b1;left:880.5px;transform:scaleX(0.9085);">24h Volume(LTC)</span>
<span class="t" style="top:171px;font-size:12px;line-height:14px;color:#fff;font-weight:bold;left:256.9px;transform:scaleX(0.8635);">8 decimals</span>
<span class="t" style="top:208px;font-size:11px;line-height:12px;color:#9ba1b1;left:12.1px;transform:scaleX(0.9440);">Price LTC</span>
<span class="t" style="top:208px;font-size:11px;line-height:12px;color:#9ba1b1;left:117.6px;transform:scaleX(0.9784);">Amount Intellihandli…</span>
<span class="r" style="top:208px;font-size:11px;line-height:12px;color:#9ba1b1;right:1038px;transform:scaleX(0.9640);">Total LTC</span>
<span class="t" style="top:556px;font-size:12.5px;line-height:14px;color:#e04d52;left:11.7px;transform:scaleX(0.8449);">0.00013000</span>
<span class="r" style="top:556px;font-size:12.5px;line-height:14px;color:#f3e9ee;font-weight:bold;right:1143.5px;transform:scaleX(0.8454);">1.0M</span>
<span class="r" style="top:556px;font-size:12.5px;line-height:14px;color:#f3e9ee;font-weight:bold;right:1038px;transform:scaleX(0.8505);">130.00000000</span>
<span class="t" style="top:585px;font-size:13px;line-height:15px;color:#e04d52;font-weight:bold;left:12.4px;transform:scaleX(0.8828);">0.00011000</span>
<span class="t" style="top:587px;font-size:11.5px;line-height:12px;color:#9ba1b1;left:87.9px;transform:scaleX(0.8049);">$0</span>
<span class="r" style="top:587px;font-size:11px;line-height:12px;color:#9ba1b1;right:1038px;transform:scaleX(0.8052);">SPREAD 7.69%</span>
<span class="t" style="top:616px;font-size:12.5px;line-height:14px;color:#28a85c;left:11.7px;transform:scaleX(0.8464);">0.00012000</span>
<span class="r" style="top:616px;font-size:12.5px;line-height:14px;color:#fff;font-weight:bold;right:1143.5px;transform:scaleX(0.8448);">20,000.00000</span>
<span class="r" style="top:616px;font-size:12.5px;line-height:14px;color:#fff;font-weight:bold;right:1038px;transform:scaleX(0.8585);">2.40000000</span>
<span class="t" style="top:171px;font-size:13.5px;line-height:15px;color:#787d8f;font-weight:bold;left:412.5px;transform:scaleX(0.9197);">1h</span>
<span class="t" style="top:172.2px;font-size:13.5px;line-height:15px;color:#787d8f;left:513.4px;transform:scaleX(1.0558);">Indicators</span>
<span class="t" style="top:169.3px;font-size:14px;line-height:16px;color:#fff;font-weight:bold;left:916.7px;transform:scaleX(0.8752);">Chart</span>
<span class="t" style="top:169.3px;font-size:14px;line-height:16px;color:#a3a8c0;left:972.5px;transform:scaleX(0.9181);">Depth</span>
<span class="t" style="top:209.6px;font-size:16px;line-height:17px;color:#fff;font-weight:bold;left:433.5px;transform:scaleX(1.0133);">Intellihandling/LTC, 60, DEX</span>
<span class="t" style="top:230.2px;font-size:12px;line-height:14px;color:#787d8f;left:410.2px;transform:scaleX(0.7492);">O</span>
<span class="t" style="top:230.2px;font-size:12px;line-height:14px;color:#26a65b;left:418.1px;transform:scaleX(0.9598);">0.00011000</span>
<span class="t" style="top:230.2px;font-size:12px;line-height:14px;color:#787d8f;left:485.4px;transform:scaleX(0.7611);">H</span>
<span class="t" style="top:230.2px;font-size:12px;line-height:14px;color:#26a65b;left:493px;transform:scaleX(0.9662);">0.00011000</span>
<span class="t" style="top:230.2px;font-size:12px;line-height:14px;color:#787d8f;left:560.2px;transform:scaleX(0.8224);">L</span>
<span class="t" style="top:230.2px;font-size:12px;line-height:14px;color:#26a65b;left:567px;transform:scaleX(0.9502);">0.00011000</span>
<span class="t" style="top:230.2px;font-size:12px;line-height:14px;color:#787d8f;left:633.8px;transform:scaleX(0.7150);">C</span>
<span class="t" style="top:230.2px;font-size:12px;line-height:14px;color:#26a65b;left:640.8px;transform:scaleX(0.9598);">0.00011000</span>
<span class="t" style="top:230.2px;font-size:12px;line-height:14px;color:#26a65b;left:707.9px;transform:scaleX(0.9417);">−0.00001000</span>
<span class="t" style="top:230.2px;font-size:12px;line-height:14px;color:#26a65b;left:779.6px;transform:scaleX(0.8892);">(−8.33%)</span>
<span class="t" style="top:226px;font-size:11px;line-height:12px;color:#787d8f;left:964px;">0.00012000</span>
<span class="t" style="top:279px;font-size:11px;line-height:12px;color:#787d8f;left:964px;transform:scaleX(1.0120);">0.00011800</span>
<span class="t" style="top:331px;font-size:11px;line-height:12px;color:#787d8f;left:964px;transform:scaleX(1.0120);">0.00011600</span>
<span class="t" style="top:384px;font-size:11px;line-height:12px;color:#787d8f;left:964px;transform:scaleX(1.0120);">0.00011400</span>
<span class="t" style="top:437px;font-size:11px;line-height:12px;color:#787d8f;left:964px;transform:scaleX(1.0120);">0.00011200</span>
<span class="t" style="top:488px;font-size:11.5px;line-height:12px;color:#fff;font-weight:bold;left:963.9px;transform:scaleX(0.9364);">0.00011000</span>
<span class="t" style="top:553px;font-size:11px;line-height:12px;color:#787d8f;left:964.6px;transform:scaleX(0.9449);">10K</span>
<span class="t" style="top:605px;font-size:11px;line-height:12px;color:#787d8f;left:964.6px;transform:scaleX(0.8980);">0</span>
<span class="t" style="top:533.6px;font-size:12px;line-height:14px;color:#787d8f;left:410.4px;transform:scaleX(0.9799);">Volume (20)</span>
<span class="t" style="top:533.6px;font-size:12px;line-height:14px;color:#0ab80a;left:553.8px;transform:scaleX(0.9503);">14.8K</span>
<span class="t" style="top:629px;font-size:11px;line-height:12px;color:#787d8f;left:529.5px;transform:scaleX(0.8816);">8</span>
<span class="t" style="top:629px;font-size:11px;line-height:12px;color:#787d8f;left:674.3px;transform:scaleX(0.8816);">9</span>
<span class="t" style="top:629px;font-size:11px;line-height:12px;color:#6f7486;font-weight:bold;left:814.4px;transform:scaleX(0.9224);">10</span>
<span class="t" style="top:629px;font-size:11px;line-height:12px;color:#6f7486;font-weight:bold;left:914.9px;transform:scaleX(0.9488);">18:00</span>
<span class="t" style="top:661.6px;font-size:14px;line-height:16px;color:#fff;font-weight:bold;left:360.8px;transform:scaleX(0.8729);">Limit</span>
<span class="t" style="top:702.6px;font-size:13px;line-height:15px;color:#fff;font-weight:bold;left:361px;transform:scaleX(0.8359);">Buy Intellihandling</span>
<span class="t" style="top:704.3px;font-size:11.5px;line-height:12px;color:#9ba1b1;left:591.9px;transform:scaleX(0.9512);">0.20406286</span>
<span class="t" style="top:704.3px;font-size:11.5px;line-height:12px;color:#6c7285;left:654.5px;transform:scaleX(0.8192);">LTC</span>
<span class="t" style="top:702.6px;font-size:13px;line-height:15px;color:#fff;font-weight:bold;left:703.7px;transform:scaleX(0.8455);">Sell Intellihandling</span>
<span class="t" style="top:704.3px;font-size:11.5px;line-height:12px;color:#9ba1b1;left:861.5px;transform:scaleX(0.9346);">8,962,199.99943</span>
<span class="t" style="top:704.3px;font-size:11.5px;line-height:12px;color:#6c7285;left:946.8px;transform:scaleX(0.9667);">Intellihandling</span>
<span class="t" style="top:664.6px;font-size:11.5px;line-height:12px;color:#a0a5b8;left:948px;transform:scaleX(0.9557);">Top up</span>
<span class="t" style="top:120px;font-size:13px;line-height:15px;color:#fff;font-weight:bold;left:1076px;transform:scaleX(0.9304);">WAVES</span>
<span class="t" style="top:120px;font-size:13px;line-height:15px;color:#a9aec4;left:1130.8px;transform:scaleX(0.9038);">BTC</span>
<span class="t" style="top:120px;font-size:13px;line-height:15px;color:#a9aec4;left:1166.4px;transform:scaleX(0.9228);">USDN</span>
<span class="t" style="top:159px;font-size:14px;line-height:16px;color:#6c7285;left:1072.3px;transform:scaleX(0.9198);">Search</span>
<span class="t" style="top:161.2px;font-size:11px;line-height:12px;color:#a9aec4;left:1199.6px;transform:scaleX(0.9495);">Change</span>
<span class="t" style="top:161.2px;font-size:11px;line-height:12px;color:#6c7285;left:1276.7px;">Volume</span>
<span class="t" style="top:194px;font-size:11px;line-height:12px;color:#a9aec4;left:1052.2px;transform:scaleX(0.9508);">Pair</span>
<span class="t" style="top:194px;font-size:11px;line-height:12px;color:#a9aec4;left:1190.5px;transform:scaleX(0.9893);">Last Price</span>
<span class="t" style="top:194px;font-size:11px;line-height:12px;color:#a9aec4;left:1299px;transform:scaleX(0.9599);">Change</span>
<span class="t" style="top:219.2px;font-size:11px;line-height:12px;color:#e4e7ef;font-weight:bold;left:1071.8px;transform:scaleX(0.9601);">ETH / WAVES</span>
<span class="t" style="top:219.2px;font-size:11px;line-height:12px;color:#28b463;left:1192px;transform:scaleX(0.9920);">227.33426201</span>
<span class="r" style="top:219.2px;font-size:11px;line-height:12px;color:#28b463;right:16px;transform:scaleX(0.9480);">1%</span>
<span class="t" style="top:244.28px;font-size:11px;line-height:12px;color:#e4e7ef;font-weight:bold;left:1071.8px;transform:scaleX(0.9322);">LTC / WAVES</span>
<span class="t" style="top:244.28px;font-size:11px;line-height:12px;color:#28b463;left:1192px;transform:scaleX(0.9920);">8.49825314</span>
<span class="r" style="top:244.28px;font-size:11px;line-height:12px;color:#28b463;right:16px;transform:scaleX(0.9480);">2.12%</span>
<span class="t" style="top:269.36px;font-size:11px;line-height:12px;color:#e4e7ef;font-weight:bold;left:1071.8px;transform:scaleX(0.9464);">CRV / WAVES</span>
<span class="t" style="top:269.36px;font-size:11px;line-height:12px;color:#28b463;left:1192px;transform:scaleX(0.9920);">0.21482004</span>
<span class="r" style="top:269.36px;font-size:11px;line-height:12px;color:#28b463;right:16px;transform:scaleX(0.9480);">9.94%</span>
<span class="t" style="top:294.44px;font-size:11px;line-height:12px;color:#e4e7ef;font-weight:bold;left:1071.8px;transform:scaleX(0.9472);">SWOP / WAVES</span>
<span class="t" style="top:294.44px;font-size:11px;line-height:12px;color:#28b463;left:1192px;transform:scaleX(0.9920);">0.45999999</span>
<span class="r" style="top:294.44px;font-size:11px;line-height:12px;color:#28b463;right:16px;transform:scaleX(0.9480);">42.27%</span>
<span class="t" style="top:319px;font-size:11px;line-height:12px;color:#e4e7ef;font-weight:bold;left:1071.8px;transform:scaleX(0.9450);">EGG / WAVES</span>
<span class="t" style="top:319px;font-size:11px;line-height:12px;color:#e04d52;left:1192px;transform:scaleX(0.9920);">31.10000011</span>
<span class="r" style="top:319px;font-size:11px;line-height:12px;color:#e04d52;right:16px;transform:scaleX(0.9480);">-2.81%</span>
<span class="t" style="top:344.6px;font-size:11px;line-height:12px;color:#e4e7ef;font-weight:bold;left:1071.8px;transform:scaleX(0.9450);">WEST / WAVES</span>
<span class="t" style="top:344.6px;font-size:11px;line-height:12px;color:#28b463;left:1192px;transform:scaleX(0.9920);">0.01658776</span>
<span class="r" style="top:344.6px;font-size:11px;line-height:12px;color:#28b463;right:16px;transform:scaleX(0.9480);">2.47%</span>
<span class="t" style="top:369.68px;font-size:11px;line-height:12px;color:#e4e7ef;font-weight:bold;left:1071.8px;transform:scaleX(0.9450);">NSBT / WAVES</span>
<span class="t" style="top:369.68px;font-size:11px;line-height:12px;color:#e04d52;left:1192px;transform:scaleX(0.9920);">1.21000002</span>
<span class="r" style="top:369.68px;font-size:11px;line-height:12px;color:#e04d52;right:16px;transform:scaleX(0.9480);">-5.47%</span>
<span class="t" style="top:394.76px;font-size:11px;line-height:12px;color:#e4e7ef;font-weight:bold;left:1071.8px;transform:scaleX(0.9450);">DASH / WAVES</span>
<span class="t" style="top:394.76px;font-size:11px;line-height:12px;color:#28b463;left:1192px;transform:scaleX(0.9920);">8.4983</span>
<span class="r" style="top:394.76px;font-size:11px;line-height:12px;color:#28b463;right:16px;transform:scaleX(0.9480);">14.69%</span>
<span class="t" style="top:419.84px;font-size:11px;line-height:12px;color:#e4e7ef;font-weight:bold;left:1071.8px;transform:scaleX(0.9450);">BCH / WAVES</span>
<span class="t" style="top:419.84px;font-size:11px;line-height:12px;color:#28b463;left:1192px;transform:scaleX(0.9920);">24.79189529</span>
<span class="r" style="top:419.84px;font-size:11px;line-height:12px;color:#28b463;right:16px;transform:scaleX(0.9480);">5.02%</span>
<span class="t" style="top:444.92px;font-size:11px;line-height:12px;color:#e4e7ef;font-weight:bold;left:1071.8px;transform:scaleX(0.9450);">XMR / WAVES</span>
<span class="t" style="top:444.92px;font-size:11px;line-height:12px;color:#28b463;left:1192px;transform:scaleX(0.9920);">10.00199999</span>
<span class="r" style="top:444.92px;font-size:11px;line-height:12px;color:#28b463;right:16px;transform:scaleX(0.9480);">0.32%</span>
<span class="t" style="top:470px;font-size:11px;line-height:12px;color:#e4e7ef;font-weight:bold;left:1071.8px;transform:scaleX(0.9450);">WCT / WAVES</span>
<span class="t" style="top:470px;font-size:11px;line-height:12px;color:#28b463;left:1192px;transform:scaleX(0.9920);">0.01</span>
<span class="r" style="top:470px;font-size:11px;line-height:12px;color:#28b463;right:16px;transform:scaleX(0.9480);">61.29%</span>
<span class="t" style="top:495.08px;font-size:11px;line-height:12px;color:#e4e7ef;font-weight:bold;left:1071.8px;transform:scaleX(0.9450);">ZEC / WAVES</span>
<span class="t" style="top:495.08px;font-size:11px;line-height:12px;color:#fff;left:1192px;transform:scaleX(0.9920);">9.08884543</span>
<span class="r" style="top:495.08px;font-size:11px;line-height:12px;color:#fff;right:16px;transform:scaleX(0.9480);">0%</span>
<span class="t" style="top:520.16px;font-size:11px;line-height:12px;color:#e4e7ef;font-weight:bold;left:1071.8px;transform:scaleX(0.9450);">TN / WAVES</span>
<span class="t" style="top:520.16px;font-size:11px;line-height:12px;color:#fff;left:1192px;transform:scaleX(0.9920);">0.00075989</span>
<span class="r" style="top:520.16px;font-size:11px;line-height:12px;color:#fff;right:16px;transform:scaleX(0.9480);">0%</span>
<span class="t" style="top:545.24px;font-size:11px;line-height:12px;color:#e4e7ef;font-weight:bold;left:1071.8px;transform:scaleX(0.9450);">SIGN / WAVES</span>
<span class="t" style="top:545.24px;font-size:11px;line-height:12px;color:#fff;left:1192px;transform:scaleX(0.9920);">0.00010999</span>
<span class="r" style="top:545.24px;font-size:11px;line-height:12px;color:#fff;right:16px;transform:scaleX(0.9480);">0%</span>
<span class="t" style="top:661.4px;font-size:14px;line-height:16px;color:#fff;font-weight:bold;left:1052.1px;transform:scaleX(0.8761);">Market Trades</span>
<span class="t" style="top:661.4px;font-size:14px;line-height:16px;color:#a9aec4;left:1159.2px;transform:scaleX(0.9027);">My Trades</span>
<span class="t" style="top:705.7px;font-size:12px;line-height:14px;color:#a9aec4;left:1052.1px;transform:scaleX(0.8767);">Price (LTC)</span>
<span class="t" style="top:705.7px;font-size:12px;line-height:14px;color:#a9aec4;left:1155.5px;transform:scaleX(0.8884);">Amount (Intellihan…</span>
<span class="r" style="top:705.7px;font-size:12px;line-height:14px;color:#a9aec4;right:20px;transform:scaleX(0.9148);">Time</span>
</body>
</html>
